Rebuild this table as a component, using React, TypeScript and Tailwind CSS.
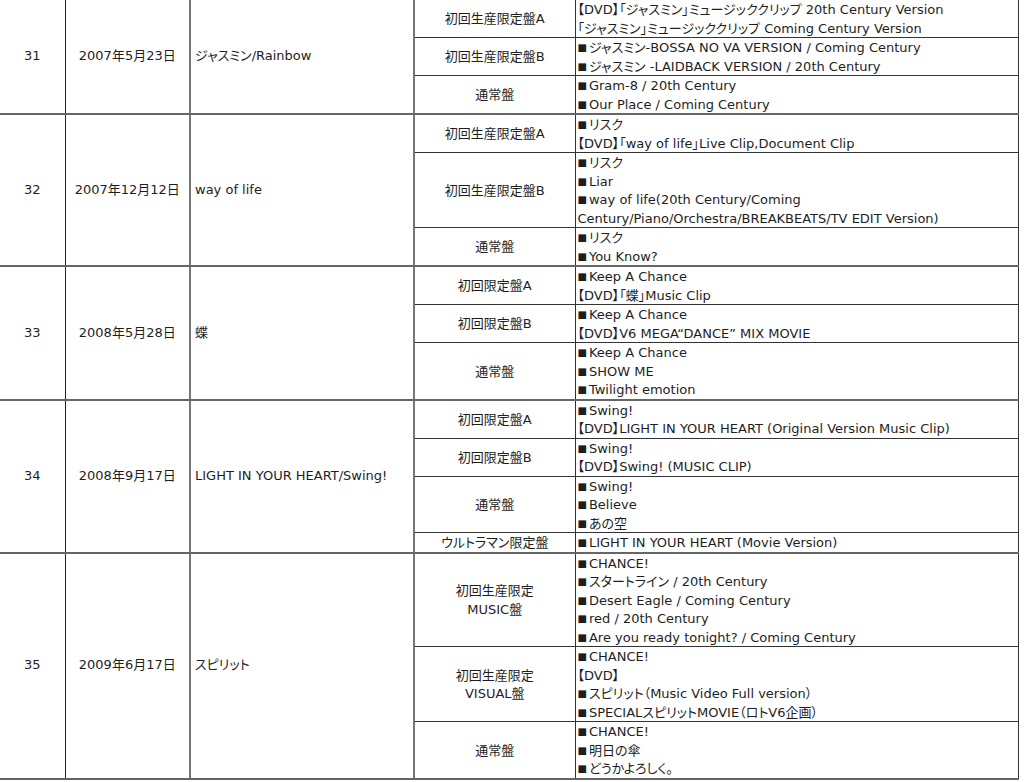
type Edition = { name: string[]; items: string[] };
type Release = { no: string; date: string; title: string; editions: Edition[] };

const releases: Release[] = [
  {
    no: "31",
    date: "2007年5月23日",
    title: "ジャスミン/Rainbow",
    editions: [
      {
        name: ["初回生産限定盤A"],
        items: [
          "【DVD】「ジャスミン」ミュージッククリップ 20th Century Version",
          "「ジャスミン」ミュージッククリップ Coming Century Version",
        ],
      },
      {
        name: ["初回生産限定盤B"],
        items: [
          "■ジャスミン-BOSSA NO VA VERSION / Coming Century",
          "■ジャスミン -LAIDBACK VERSION / 20th Century",
        ],
      },
      { name: ["通常盤"], items: ["■Gram-8 / 20th Century", "■Our Place / Coming Century"] },
    ],
  },
  {
    no: "32",
    date: "2007年12月12日",
    title: "way of life",
    editions: [
      { name: ["初回生産限定盤A"], items: ["■リスク", "【DVD】「way of life」Live Clip,Document Clip"] },
      {
        name: ["初回生産限定盤B"],
        items: [
          "■リスク",
          "■Liar",
          "■way of life(20th Century/Coming",
          "Century/Piano/Orchestra/BREAKBEATS/TV EDIT Version)",
        ],
      },
      { name: ["通常盤"], items: ["■リスク", "■You Know?"] },
    ],
  },
  {
    no: "33",
    date: "2008年5月28日",
    title: "蝶",
    editions: [
      { name: ["初回限定盤A"], items: ["■Keep A Chance", "【DVD】「蝶」Music Clip"] },
      { name: ["初回限定盤B"], items: ["■Keep A Chance", "【DVD】V6 MEGA“DANCE” MIX MOVIE"] },
      { name: ["通常盤"], items: ["■Keep A Chance", "■SHOW ME", "■Twilight emotion"] },
    ],
  },
  {
    no: "34",
    date: "2008年9月17日",
    title: "LIGHT IN YOUR HEART/Swing!",
    editions: [
      {
        name: ["初回限定盤A"],
        items: ["■Swing!", "【DVD】LIGHT IN YOUR HEART (Original Version Music Clip)"],
      },
      { name: ["初回限定盤B"], items: ["■Swing!", "【DVD】Swing! (MUSIC CLIP)"] },
      { name: ["通常盤"], items: ["■Swing!", "■Believe", "■あの空"] },
      { name: ["ウルトラマン限定盤"], items: ["■LIGHT IN YOUR HEART (Movie Version)"] },
    ],
  },
  {
    no: "35",
    date: "2009年6月17日",
    title: "スピリット",
    editions: [
      {
        name: ["初回生産限定", "MUSIC盤"],
        items: [
          "■CHANCE!",
          "■スタートライン / 20th Century",
          "■Desert Eagle / Coming Century",
          "■red / 20th Century",
          "■Are you ready tonight? / Coming Century",
        ],
      },
      {
        name: ["初回生産限定", "VISUAL盤"],
        items: [
          "■CHANCE!",
          "【DVD】",
          "■スピリット（Music Video Full version）",
          "■SPECIALスピリットMOVIE（ロトV6企画）",
        ],
      },
      { name: ["通常盤"], items: ["■CHANCE!", "■明日の傘", "■どうかよろしく。"] },
    ],
  },
];

// one text line in a cell; fixed height so CJK fallback doesn't grow the row
function Line({ text }: { text: string }) {
  const bullet = text.startsWith("■");
  return (
    <div className="h-[18.5px] leading-[19px] whitespace-nowrap overflow-visible">
      {bullet && <span className="text-[10px] mr-[2px] relative -top-px">■</span>}
      {bullet ? text.slice(1) : text}
    </div>
  );
}

export default function App() {
  return (
    <div
      className="w-[1024px] h-[782px] overflow-hidden bg-white text-[#1e1e1e] text-[13px] leading-[18.5px] [font-feature-settings:'palt']"
      style={{ fontFamily: '"DejaVu Sans", "Noto Sans CJK JP", sans-serif' }}
    >
      <table className="border-collapse table-fixed w-[1018px]">
        <colgroup>
          <col className="w-[65px]" />
          <col className="w-[125px]" />
          <col className="w-[224px]" />
          <col className="w-[161px]" />
          <col className="w-[443px]" />
        </colgroup>
        <tbody>
          {releases.map((r) =>
            r.editions.map((ed, i) => {
              const last = i === r.editions.length - 1;
              const rowBottom = last ? "border-b-2 border-b-[#666]" : "border-b border-b-[#333]";
              return (
                <tr key={r.no + "-" + i}>
                  {i === 0 && (
                    <>
                      <td
                        rowSpan={r.editions.length}
                        className="border-r border-r-[#222] border-b-2 border-b-[#666] text-center align-middle"
                      >
                        {r.no}
                      </td>
                      <td
                        rowSpan={r.editions.length}
                        className="border-r-2 border-r-[#777] border-b-2 border-b-[#666] text-center align-middle"
                      >
                        {r.date}
                      </td>
                      <td
                        rowSpan={r.editions.length}
                        className="border-r-2 border-r-[#777] border-b-2 border-b-[#666] pl-[4px] align-middle whitespace-nowrap"
                      >
                        {r.title}
                      </td>
                    </>
                  )}
                  <td className={`border-r border-r-[#333] ${rowBottom} text-center align-middle`}>
                    {ed.name.map((n) => (
                      <Line key={n} text={n} />
                    ))}
                  </td>
                  <td className={`border-r border-r-[#333] ${rowBottom} pl-[2px] align-top`}>
                    {ed.items.map((t, k) => (
                      <Line key={k} text={t} />
                    ))}
                  </td>
                </tr>
              );
            })
          )}
        </tbody>
      </table>
    </div>
  );
}
